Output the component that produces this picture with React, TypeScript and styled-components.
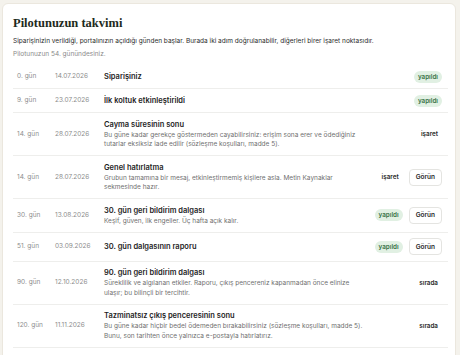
import * as React from 'react';
import styled, { createGlobalStyle } from 'styled-components';

type Status = 'yapıldı' | 'işaret' | 'sırada';

interface Milestone {
  day: string;
  date: string;
  title: string;
  desc?: string;
  status: Status;
  action?: boolean;
}

const MILESTONES: Milestone[] = [
  { day: '0. gün', date: '14.07.2026', title: 'Siparişiniz', status: 'yapıldı' },
  { day: '9. gün', date: '23.07.2026', title: 'İlk koltuk etkinleştirildi', status: 'yapıldı' },
  {
    day: '14. gün',
    date: '28.07.2026',
    title: 'Cayma süresinin sonu',
    desc: 'Bu güne kadar gerekçe göstermeden cayabilirsiniz: erişim sona erer ve ödediğiniz tutarlar eksiksiz iade edilir (sözleşme koşulları, madde 5).',
    status: 'işaret',
  },
  {
    day: '14. gün',
    date: '28.07.2026',
    title: 'Genel hatırlatma',
    desc: 'Grubun tamamına bir mesaj, etkinleştirmemiş kişilere asla. Metin Kaynaklar sekmesinde hazır.',
    status: 'işaret',
    action: true,
  },
  {
    day: '30. gün',
    date: '13.08.2026',
    title: '30. gün geri bildirim dalgası',
    desc: 'Keşif, güven, ilk engeller. Üç hafta açık kalır.',
    status: 'yapıldı',
    action: true,
  },
  { day: '51. gün', date: '03.09.2026', title: '30. gün dalgasının raporu', status: 'yapıldı', action: true },
  {
    day: '90. gün',
    date: '12.10.2026',
    title: '90. gün geri bildirim dalgası',
    desc: 'Süreklilik ve algılanan etkiler. Raporu, çıkış pencereniz kapanmadan önce elinize ulaşır; bu bilinçli bir tercihtir.',
    status: 'sırada',
  },
  {
    day: '120. gün',
    date: '11.11.2026',
    title: 'Tazminatsız çıkış penceresinin sonu',
    desc: 'Bu güne kadar hiçbir bedel ödemeden bırakabilirsiniz (sözleşme koşulları, madde 5). Bunu, son tarihten önce yalnızca e-postayla hatırlatırız.',
    status: 'sırada',
  },
];

const GlobalStyle = createGlobalStyle`
  body {
    margin: 0;
    padding: 3px 4px 0 2px;
    background: #f4f2ec;
    font-family: Inter, "Noto Sans", sans-serif;
    color: #222;
  }
`;

const Card = styled.section`
  background: #fff;
  border: 1px solid #ebe7de;
  border-radius: 6px;
  padding: 11px 7px 20px 10px;
`;

const Title = styled.h1`
  margin: 0;
  font-family: "Liberation Serif", "DejaVu Serif", serif;
  font-size: 12.5px;
  line-height: 16px;
  font-weight: 700;
  color: #1d2a20;
`;

const Lead = styled.p`
  margin: 6px 0 0;
  font-size: 6.5px;
  line-height: 9px;
  color: #2b2b2b;
`;

const Sub = styled.p`
  margin: 4px 0 0;
  font-size: 6.5px;
  line-height: 9px;
  color: #8a8a8a;
`;

const List = styled.div`
  margin-top: 6px;
`;

const Row = styled.div`
  display: grid;
  grid-template-columns: 38px 49px 1fr auto;
  align-items: center;
  padding: 5.5px 6px 5.5px 4px;
  border-bottom: 1px solid #eeeeec;
`;

const Meta = styled.div`
  font-size: 6.5px;
  line-height: 9px;
  color: #8c8c8c;
`;

const Body = styled.div`
  display: flex;
  flex-direction: column;
`;

const RowTitle = styled.div`
  font-size: 7.5px;
  line-height: 11px;
  font-weight: 600;
  color: #1e1e1e;
`;

const Desc = styled.div`
  margin-top: 1px;
  max-width: 264px;
  font-size: 6.5px;
  line-height: 9.5px;
  color: #6f6f6f;
`;

const Side = styled.div`
  display: flex;
  align-items: center;
  justify-content: flex-end;
  gap: 6px;
`;

const Badge = styled.span<{ $done: boolean }>`
  padding: 2px 4px;
  border-radius: 7px;
  font-size: 6.3px;
  line-height: 8px;
  font-weight: 600;
  background: ${(p) => (p.$done ? '#e1f0e3' : 'transparent')};
  color: ${(p) => (p.$done ? '#3b7448' : '#2a2a2a')};
`;

const ActionButton = styled.button`
  height: 17px;
  padding: 0 6px;
  border: 1px solid #e4e4e1;
  border-radius: 4px;
  background: #fff;
  font-family: inherit;
  font-size: 6.5px;
  font-weight: 600;
  color: #2a2a2a;
`;

const App: React.FC = () => (
  <>
    <GlobalStyle />
    <Card>
      <Title>Pilotunuzun takvimi</Title>
      <Lead>
        Siparişinizin verildiği, portalınızın açıldığı günden başlar. Burada iki adım doğrulanabilir, diğerleri birer işaret noktasıdır.
      </Lead>
      <Sub>Pilotunuzun 54. günündesiniz.</Sub>
      <List>
        {MILESTONES.map((m, i) => (
          <Row key={i}>
            <Meta>{m.day}</Meta>
            <Meta>{m.date}</Meta>
            <Body>
              <RowTitle>{m.title}</RowTitle>
              {m.desc && <Desc>{m.desc}</Desc>}
            </Body>
            <Side>
              <Badge $done={m.status === 'yapıldı'}>{m.status}</Badge>
              {m.action && <ActionButton type="button">Görün</ActionButton>}
            </Side>
          </Row>
        ))}
      </List>
    </Card>
  </>
);

export default App;
